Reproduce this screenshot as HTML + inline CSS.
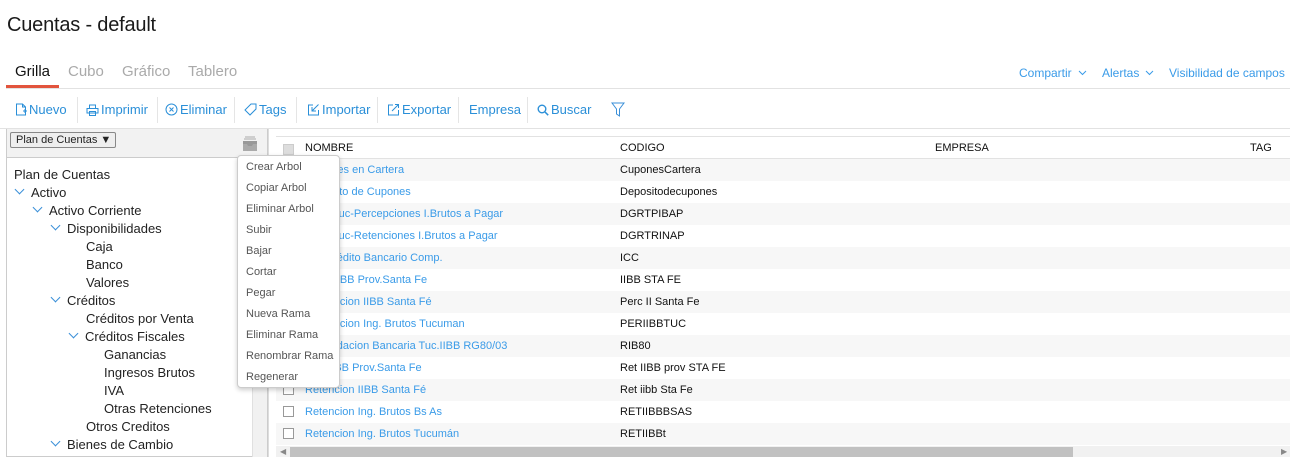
<!DOCTYPE html>
<html><head><meta charset="utf-8"><style>
*{box-sizing:border-box;margin:0;padding:0}
body{width:1290px;height:457px;overflow:hidden;background:#fff;font-family:"Liberation Sans",sans-serif;position:relative;color:#222}
.a{position:absolute;white-space:nowrap}
h1{position:absolute;left:7px;top:14px;font-weight:normal;font-size:20px;color:#1a1a1a;letter-spacing:-0.2px}
.tab{position:absolute;top:63px;font-size:15px;color:#aaa}
.tb{position:absolute;top:102px;font-size:13px;color:#2a8fd8;display:flex;align-items:center}
.tb svg{margin-right:2px}
.sep{position:absolute;top:97px;width:1px;height:26px;background:#e5e5e5}
.tree{position:absolute;font-size:13px;color:#222}
.chev{display:inline-block;width:7px;height:7px;border-right:1px solid #3a8fd8;border-bottom:1px solid #3a8fd8;transform:rotate(45deg);margin-right:8px;position:relative;top:-4px}
.row{position:absolute;left:276px;width:1014px;height:22px;font-size:11px}
.row .n{position:absolute;left:29px;top:5px;color:#3a9be8}
.row .c{position:absolute;left:344px;top:5px;color:#111}
.cb{position:absolute;left:7px;top:5px;width:11px;height:11px;border:1px solid #999;background:#fff}
.menu div{height:21px;padding-left:8px;font-size:11px;color:#555;line-height:20px}
.tr{position:absolute;top:66px;font-size:12px;color:#3a9be8;display:flex;align-items:center}
.tr svg{margin-left:6px}
</style></head><body>
<h1>Cuentas - default</h1>
<div class="tab" style="left:15px;color:#111">Grilla</div>
<div class="a" style="left:6px;top:85px;width:53px;height:3px;background:#e2543d"></div>
<div class="tab" style="left:68px">Cubo</div>
<div class="tab" style="left:122px">Gráfico</div>
<div class="tab" style="left:188px">Tablero</div>
<div class="a" style="left:6px;top:88px;width:1284px;height:1px;background:#e2e2e2"></div>
<div class="tr" style="left:1019px">Compartir<svg width="9" height="6"><path d="M1 1l3.5 3.5L8 1" fill="none" stroke="#3a9be8"/></svg></div>
<div class="tr" style="left:1102px">Alertas<svg width="9" height="6"><path d="M1 1l3.5 3.5L8 1" fill="none" stroke="#3a9be8"/></svg></div>
<div class="tr" style="left:1169px">Visibilidad de campos</div>

<div class="tb" style="left:15px"><svg width="12" height="13"><path d="M1.5 1h6l3 3v8h-9z M7.5 1v3h3 M8 8h4 M10 6v4" fill="none" stroke="#2a8fd8"/></svg>Nuevo</div>
<div class="sep" style="left:77px"></div>
<div class="tb" style="left:86px"><svg width="13" height="12"><path d="M3.5 4V1h6v3 M1 4.5h11v4.5H1z M3.5 7.5h6v4h-6z" fill="none" stroke="#2a8fd8"/></svg>Imprimir</div>
<div class="sep" style="left:157px"></div>
<div class="tb" style="left:165px"><svg width="13" height="13"><circle cx="6.5" cy="6.5" r="5.5" fill="none" stroke="#2a8fd8"/><path d="M4.5 4.5l4 4M8.5 4.5l-4 4" stroke="#2a8fd8"/></svg>Eliminar</div>
<div class="sep" style="left:234px"></div>
<div class="tb" style="left:244px"><svg width="13" height="13"><path d="M7 1h5v5l-6 6-5-5z" fill="none" stroke="#2a8fd8"/></svg>Tags</div>
<div class="sep" style="left:296px"></div>
<div class="tb" style="left:307px"><svg width="13" height="13"><path d="M6 2H1.5v10h10V7 M11.5 1.5L5 8 M5 4v4h4" fill="none" stroke="#2a8fd8"/></svg>Importar</div>
<div class="sep" style="left:377px"></div>
<div class="tb" style="left:387px"><svg width="13" height="13"><path d="M6 2H1.5v10h10V7 M5 8l6.5-6.5 M8 1.5h3.5V5" fill="none" stroke="#2a8fd8"/></svg>Exportar</div>
<div class="sep" style="left:458px"></div>
<div class="tb" style="left:469px">Empresa</div>
<div class="sep" style="left:527px"></div>
<div class="tb" style="left:537px"><svg width="12" height="12"><circle cx="5" cy="5" r="3.8" fill="none" stroke="#2a8fd8" stroke-width="1.4"/><path d="M8 8l3.2 3.2" stroke="#2a8fd8" stroke-width="1.5"/></svg>Buscar</div>
<svg class="a" style="left:611px;top:102px" width="14" height="15"><path d="M1 1h12L8.5 7v7L5.5 12V7z" fill="none" stroke="#3a8fd8"/></svg>
<div class="a" style="left:0;top:128px;width:1290px;height:1px;background:#e2e2e2"></div>

<div class="a" style="left:6px;top:129px;width:262px;height:328px;border:1px solid #ccc;border-top:none;background:#fff"></div>
<div class="a" style="left:7px;top:129px;width:260px;height:29px;background:#f2f2f2;border-bottom:1px solid #ccc"></div>
<div class="a" style="left:10px;top:132px;width:106px;height:16px;border:1px solid #888;border-radius:2px;background:#eee;font-size:11px;padding:1px 5px">Plan de Cuentas ▼</div>
<svg class="a" style="left:242px;top:136px" width="16" height="16"><path d="M3 1h10M2 3h12" stroke="#aaa"/><path d="M1 5h14v10H1z" fill="#aaa"/><path d="M1 5h14v3l-4 0-1 2H6L5 8H1z" fill="#999"/></svg>
<div class="a" style="left:252px;top:159px;width:15px;height:298px;background:#f1f1f1;border-left:1px solid #e0e0e0"></div>
<div class="a" style="left:268px;top:129px;width:8px;height:328px;background:#fff;border-left:1px solid #ddd"></div>
<div class="tree" style="left:14px;top:167px">Plan de Cuentas</div>
<div class="tree" style="left:16px;top:185px"><span class="chev"></span>Activo</div>
<div class="tree" style="left:34px;top:203px"><span class="chev"></span>Activo Corriente</div>
<div class="tree" style="left:52px;top:221px"><span class="chev"></span>Disponibilidades</div>
<div class="tree" style="left:86px;top:239px">Caja</div>
<div class="tree" style="left:86px;top:257px">Banco</div>
<div class="tree" style="left:86px;top:275px">Valores</div>
<div class="tree" style="left:52px;top:293px"><span class="chev"></span>Créditos</div>
<div class="tree" style="left:86px;top:311px">Créditos por Venta</div>
<div class="tree" style="left:70px;top:329px"><span class="chev"></span>Créditos Fiscales</div>
<div class="tree" style="left:104px;top:347px">Ganancias</div>
<div class="tree" style="left:104px;top:365px">Ingresos Brutos</div>
<div class="tree" style="left:104px;top:383px">IVA</div>
<div class="tree" style="left:104px;top:401px">Otras Retenciones</div>
<div class="tree" style="left:86px;top:419px">Otros Creditos</div>
<div class="tree" style="left:52px;top:437px"><span class="chev"></span>Bienes de Cambio</div>

<div class="row" style="top:136px;height:23px;border-bottom:1px solid #e2e2e2;border-top:1px solid #e2e2e2">
<div class="cb" style="top:7px;background:#ddd;border-color:#ccc"></div>
<div class="a" style="left:29px;top:5px;color:#111">NOMBRE</div>
<div class="a" style="left:344px;top:5px;color:#111">CODIGO</div>
<div class="a" style="left:659px;top:5px;color:#111">EMPRESA</div>
<div class="a" style="left:974px;top:5px;color:#111">TAG</div>
</div>
<div class="row" style="top:159px;background:#f7f7f7"><div class="cb"></div><div class="n">Cupones en Cartera</div><div class="c">CuponesCartera</div></div>
<div class="row" style="top:181px"><div class="cb"></div><div class="n">Deposito de Cupones</div><div class="c">Depositodecupones</div></div>
<div class="row" style="top:203px;background:#f7f7f7"><div class="cb"></div><div class="n">DGR Tuc-Percepciones I.Brutos a Pagar</div><div class="c">DGRTPIBAP</div></div>
<div class="row" style="top:225px"><div class="cb"></div><div class="n">DGR Tuc-Retenciones I.Brutos a Pagar</div><div class="c">DGRTRINAP</div></div>
<div class="row" style="top:247px;background:#f7f7f7"><div class="cb"></div><div class="n">I.C. Crédito Bancario Comp.</div><div class="c">ICC</div></div>
<div class="row" style="top:269px"><div class="cb"></div><div class="n">Perc. IIBB Prov.Santa Fe</div><div class="c">IIBB STA FE</div></div>
<div class="row" style="top:291px;background:#f7f7f7"><div class="cb"></div><div class="n">Percepcion IIBB Santa Fé</div><div class="c">Perc II Santa Fe</div></div>
<div class="row" style="top:313px"><div class="cb"></div><div class="n">Percepcion Ing. Brutos Tucuman</div><div class="c">PERIIBBTUC</div></div>
<div class="row" style="top:335px;background:#f7f7f7"><div class="cb"></div><div class="n">Recaudacion Bancaria Tuc.IIBB RG80/03</div><div class="c">RIB80</div></div>
<div class="row" style="top:357px"><div class="cb"></div><div class="n">Ret. IIBB Prov.Santa Fe</div><div class="c">Ret IIBB prov STA FE</div></div>
<div class="row" style="top:379px;background:#f7f7f7"><div class="cb"></div><div class="n">Retencion IIBB Santa Fé</div><div class="c">Ret iibb Sta Fe</div></div>
<div class="row" style="top:401px"><div class="cb"></div><div class="n">Retencion Ing. Brutos Bs As</div><div class="c">RETIIBBBSAS</div></div>
<div class="row" style="top:423px;background:#f7f7f7"><div class="cb"></div><div class="n">Retencion Ing. Brutos Tucumán</div><div class="c">RETIIBBt</div></div>
<div class="a" style="left:276px;top:446px;width:1014px;height:11px;background:#f1f1f1"></div>
<div class="a" style="left:290px;top:447px;width:783px;height:10px;background:#c1c1c1"></div>
<div class="a" style="left:280px;top:447px;font-size:8px;color:#888">◀</div>
<div class="a" style="left:1281px;top:447px;font-size:8px;color:#888">▶</div>

<div class="a menu" style="left:237px;top:155px;width:103px;height:233px;background:#fff;border:1px solid #ccc;border-radius:4px;box-shadow:0 2px 5px rgba(0,0,0,.2);padding-top:1px">
<div>Crear Arbol</div><div>Copiar Arbol</div><div>Eliminar Arbol</div><div>Subir</div><div>Bajar</div><div>Cortar</div><div>Pegar</div><div>Nueva Rama</div><div>Eliminar Rama</div><div>Renombrar Rama</div><div>Regenerar</div>
</div>
</body></html>
